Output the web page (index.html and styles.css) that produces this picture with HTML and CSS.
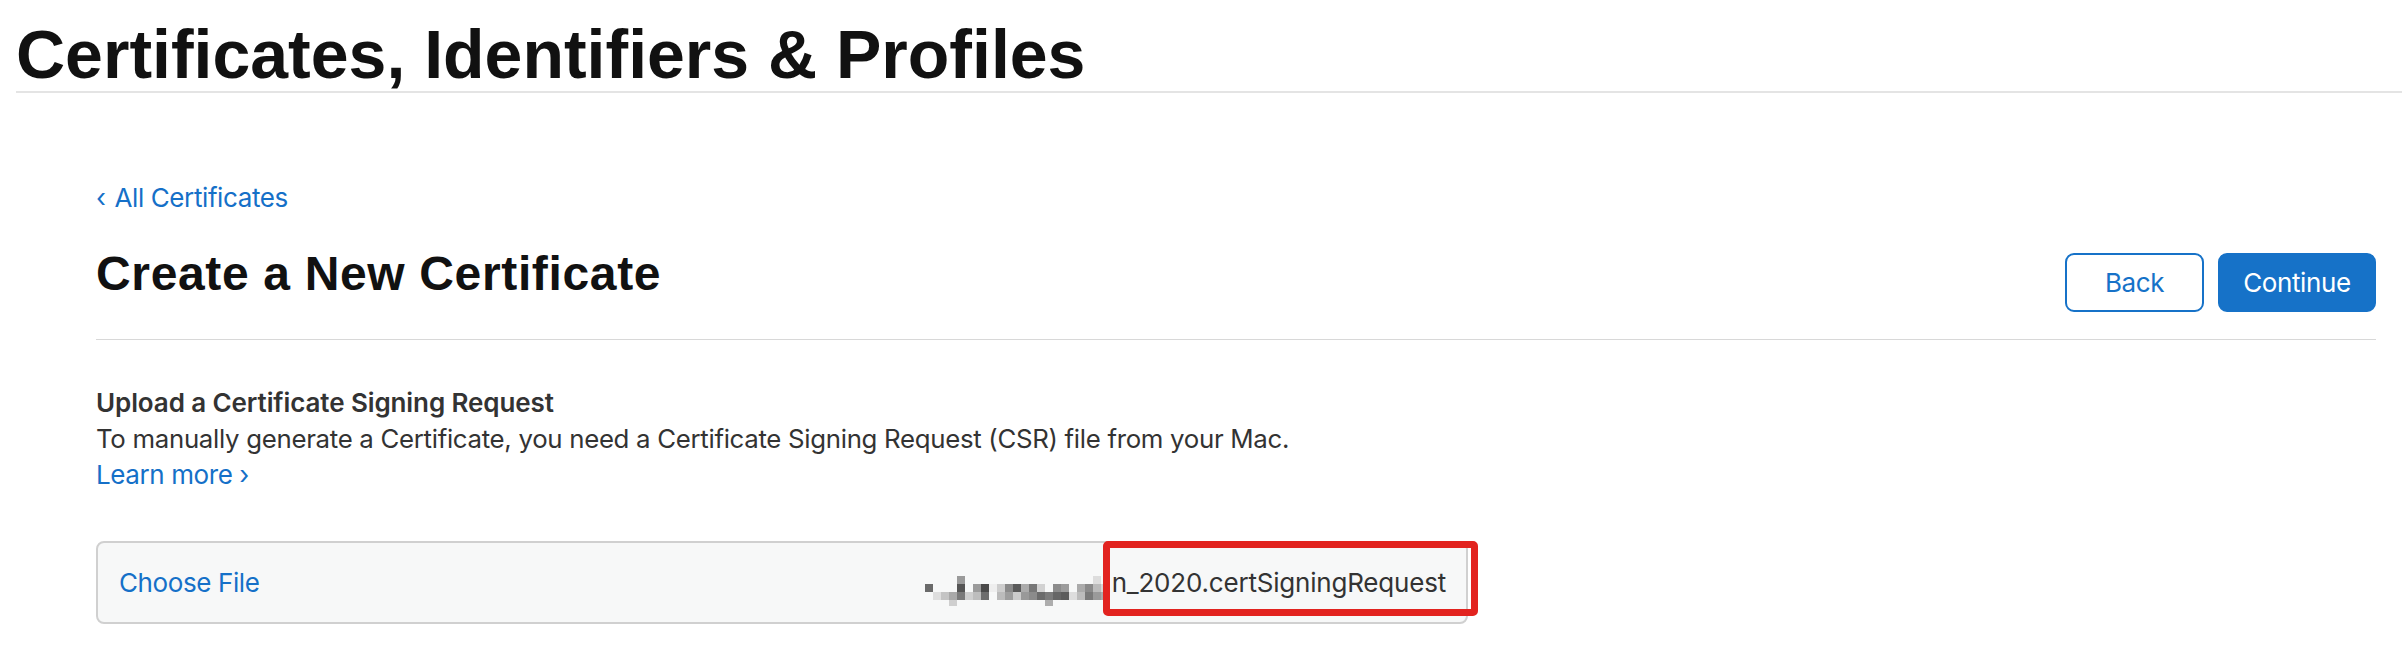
FILE: index.html
```html
<!DOCTYPE html>
<html lang="en">
<head>
<meta charset="utf-8">
<title>Certificates, Identifiers &amp; Profiles</title>
<link rel="stylesheet" href="styles.css">
</head>
<body>
<header class="site-header">
  <h1 class="site-title">Certificates, Identifiers &amp; Profiles</h1>
</header>
<main class="page">
  <a class="back-link" href="#"><span class="chev">‹</span> All Certificates</a>
  <div class="title-row">
    <h2 class="page-title">Create a New Certificate</h2>
    <div class="actions">
      <button class="btn btn-secondary" type="button">Back</button>
      <button class="btn btn-primary" type="button">Continue</button>
    </div>
  </div>
  <section class="upload">
    <h3 class="upload-title">Upload a Certificate Signing Request</h3>
    <p class="upload-desc">To manually generate a Certificate, you need a Certificate Signing Request (CSR) file from your Mac.</p>
    <a class="learn-more" href="#">Learn more ›</a>
    <div class="file-field">
      <span class="choose-file">Choose File</span>
      <span class="file-name">
        <svg class="mosaic" width="184" height="32" viewBox="0 0 184 32">
          <rect x="0" y="8" width="8" height="8" fill="#6a6a6a"/>
          <rect x="8" y="16" width="8" height="8" fill="#dedede"/>
          <rect x="16" y="16" width="8" height="8" fill="#c4c4c4"/>
          <rect x="24" y="16" width="8" height="8" fill="#a9a9a9"/>
          <rect x="24" y="24" width="8" height="6" fill="#cfcfcf"/>
          <rect x="32" y="0" width="8" height="8" fill="#9a9a9a"/>
          <rect x="32" y="8" width="8" height="8" fill="#555"/>
          <rect x="32" y="16" width="8" height="8" fill="#7a7a7a"/>
          <rect x="40" y="16" width="8" height="8" fill="#cfcfcf"/>
          <rect x="48" y="8" width="8" height="8" fill="#9b9b9b"/>
          <rect x="48" y="16" width="8" height="8" fill="#bdbdbd"/>
          <rect x="56" y="8" width="8" height="8" fill="#4a4a4a"/>
          <rect x="56" y="16" width="8" height="8" fill="#6d6d6d"/>
          <rect x="64" y="8" width="8" height="8" fill="#eeeeee"/>
          <rect x="72" y="8" width="8" height="8" fill="#cdcdcd"/>
          <rect x="72" y="16" width="8" height="8" fill="#bbbbbb"/>
          <rect x="80" y="8" width="8" height="8" fill="#8a8a8a"/>
          <rect x="80" y="16" width="8" height="8" fill="#9d9d9d"/>
          <rect x="88" y="8" width="8" height="8" fill="#5a5a5a"/>
          <rect x="88" y="16" width="8" height="8" fill="#cccccc"/>
          <rect x="96" y="8" width="8" height="8" fill="#ababab"/>
          <rect x="96" y="16" width="8" height="8" fill="#999"/>
          <rect x="104" y="8" width="8" height="8" fill="#777"/>
          <rect x="104" y="16" width="8" height="8" fill="#8b8b8b"/>
          <rect x="112" y="8" width="8" height="8" fill="#d2d2d2"/>
          <rect x="112" y="16" width="8" height="8" fill="#6b6b6b"/>
          <rect x="120" y="16" width="8" height="8" fill="#7b7b7b"/>
          <rect x="120" y="24" width="8" height="6" fill="#adadad"/>
          <rect x="128" y="8" width="8" height="8" fill="#8c8c8c"/>
          <rect x="128" y="16" width="8" height="8" fill="#666"/>
          <rect x="136" y="8" width="8" height="8" fill="#9c9c9c"/>
          <rect x="136" y="16" width="8" height="8" fill="#5c5c5c"/>
          <rect x="144" y="16" width="8" height="8" fill="#dddddd"/>
          <rect x="152" y="8" width="8" height="8" fill="#ababab"/>
          <rect x="152" y="16" width="8" height="8" fill="#bcbcbc"/>
          <rect x="160" y="8" width="8" height="8" fill="#8a8a8a"/>
          <rect x="160" y="16" width="8" height="8" fill="#7a7a7a"/>
          <rect x="168" y="0" width="8" height="8" fill="#dddddd"/>
          <rect x="168" y="8" width="8" height="8" fill="#bbbbbb"/>
          <rect x="168" y="16" width="8" height="8" fill="#9a9a9a"/>
          <rect x="176" y="8" width="8" height="8" fill="#d6d6d6"/>
          <rect x="176" y="16" width="8" height="8" fill="#aaaaaa"/>
        </svg>
        <span class="file-text">n_2020.certSigningRequest</span>
      </span>
      <div class="highlight"></div>
    </div>
  </section>
</main>
</body>
</html>
```
FILE: styles.css
```css
body {
  margin: 0;
  background: #fff;
  color: #333;
  font-family: Inter, "Noto Sans", sans-serif;
  font-size: 26px;
  letter-spacing: -0.4px;
}

.site-header {
  margin-left: 16px;
  padding: 20px 0 3px;
  border-bottom: 2px solid #e4e4e4;
}

.site-title {
  margin: 0;
  font: 700 68px/68px "Liberation Sans", Arial, sans-serif;
  letter-spacing: 0;
  color: #111;
}

.page {
  padding: 0 26px 0 96px;
}

.back-link {
  display: block;
  margin-top: 90px;
  line-height: 30px;
  color: #1570c8;
  text-decoration: none;
}

.chev {
  display: inline-block;
  margin-right: 2px;
}

.title-row {
  display: flex;
  justify-content: space-between;
  align-items: flex-start;
  margin-top: 36px;
  padding-bottom: 27px;
  border-bottom: 1px solid #d8d8d8;
}

.page-title {
  margin: 0;
  font: 700 48px/50px "Liberation Sans", Arial, sans-serif;
  letter-spacing: 0.65px;
  color: #111;
}

.actions {
  display: flex;
  gap: 14px;
  margin-top: 4px;
}

.btn {
  box-sizing: border-box;
  height: 59px;
  padding: 0;
  border: 2px solid #1672c8;
  border-radius: 9px;
  font-family: Inter, "Noto Sans", sans-serif;
  font-size: 26px;
  letter-spacing: -0.4px;
  cursor: pointer;
}

.btn-secondary {
  width: 139px;
  background: #fff;
  color: #1672c8;
}

.btn-primary {
  width: 158px;
  background: #1672c8;
  color: #fff;
}

.upload {
  padding-top: 45px;
}

.upload-title {
  margin: 0;
  font-size: 26px;
  font-weight: 600;
  line-height: 36px;
  letter-spacing: -0.1px;
  color: #333;
}

.upload-desc {
  margin: 0;
  font-size: 25.8px;
  line-height: 36px;
  letter-spacing: -0.3px;
}

.learn-more {
  display: block;
  line-height: 36px;
  color: #1570c8;
  text-decoration: none;
}

.file-field {
  position: relative;
  box-sizing: border-box;
  width: 1372px;
  height: 83px;
  margin-top: 48px;
  padding: 0 20px 0 21px;
  display: flex;
  align-items: center;
  border: 2px solid #d0d0d0;
  border-radius: 8px;
  background: #f7f8f8;
}

.choose-file {
  color: #1570c8;
}

.file-name {
  margin-left: auto;
  display: flex;
  align-items: center;
  gap: 3px;
  color: #333;
}

.file-text {
  letter-spacing: -0.2px;
}

.mosaic {
  display: block;
  margin-top: 18px;
}

.highlight {
  position: absolute;
  left: 1005px;
  top: -2px;
  box-sizing: border-box;
  width: 375px;
  height: 75px;
  border: 7px solid #e2231f;
  border-radius: 5px;
}
```
